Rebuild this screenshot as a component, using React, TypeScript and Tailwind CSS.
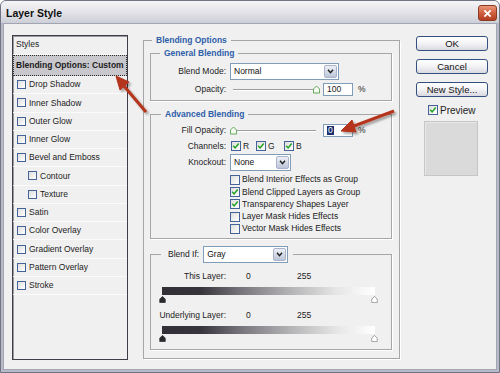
import React from "react";

const effects = [
  { label: "Drop Shadow" },
  { label: "Inner Shadow" },
  { label: "Outer Glow" },
  { label: "Inner Glow" },
  { label: "Bevel and Emboss" },
  { label: "Contour", sub: true },
  { label: "Texture", sub: true },
  { label: "Satin" },
  { label: "Color Overlay" },
  { label: "Gradient Overlay" },
  { label: "Pattern Overlay" },
  { label: "Stroke" },
];

const advancedOptions = [
  { label: "Blend Interior Effects as Group", checked: false },
  { label: "Blend Clipped Layers as Group", checked: true },
  { label: "Transparency Shapes Layer", checked: true },
  { label: "Layer Mask Hides Effects", checked: false },
  { label: "Vector Mask Hides Effects", checked: false },
];

const CheckBox: React.FC<{ checked?: boolean; small?: boolean }> = ({ checked = false, small = false }) => (
  <span
    className={`inline-flex shrink-0 items-center justify-center border border-[#44639a] bg-gradient-to-br from-[#dedfdb] to-white ${
      small ? "h-[9px] w-[9px]" : "h-[10px] w-[10px]"
    }`}
  >
    {checked && (
      <svg viewBox="0 0 10 10" className="h-[8px] w-[8px]">
        <path d="M1.5 4.8 L3.9 7.4 L8.4 2" fill="none" stroke="#23a323" strokeWidth="1.9" />
      </svg>
    )}
  </span>
);

const Select: React.FC<{ value: string; width: string }> = ({ value, width }) => (
  <div className={`flex h-[17px] shrink-0 items-stretch border border-[#7f9db9] bg-white ${width}`}>
    <span className="flex-1 pl-[3px] text-[8.5px] font-normal leading-[15px] text-[#111]">{value}</span>
    <span className="m-px flex w-[13px] items-center justify-center rounded-[2px] border border-[#a9b4cc] bg-gradient-to-b from-[#eef0f6] to-[#bcc5d8]">
      <svg viewBox="0 0 8 6" className="h-[5px] w-[7px]">
        <path d="M1 1 L4 4.5 L7 1" fill="none" stroke="#1e1e1e" strokeWidth="1.7" />
      </svg>
    </span>
  </div>
);

const Thumb: React.FC<{ fill: string; stroke: string; className?: string }> = ({ fill, stroke, className }) => (
  <svg viewBox="0 0 8 9" className={className ?? "h-[9px] w-[7px]"}>
    <path d="M0.5 8.5 V4 L4 0.5 L7.5 4 V8.5 Z" fill={fill} stroke={stroke} />
  </svg>
);

const Slider: React.FC<{ atEnd?: boolean }> = ({ atEnd = false }) => (
  <div className="relative h-[13px] w-[90px] shrink-0">
    <div className="absolute left-[3px] right-[4px] top-[6px] h-[2px] border-t border-b border-t-[#9d9d9d] border-b-white" />
    <div className={`absolute top-[2px] ${atEnd ? "left-[83px]" : "left-0"}`}>
      <Thumb fill="#f6fbf2" stroke="#4f9a46" />
    </div>
  </div>
);

const PercentInput: React.FC<{ value: string; selected?: boolean }> = ({ value, selected = false }) => (
  <div className="ml-[3px] flex h-[13px] w-[30px] shrink-0 items-center border border-[#7f9db9] bg-white pl-[3px] text-[8.5px]">
    {selected ? <span className="bg-[#1c2f6e] px-px leading-[9px] text-white">{value}</span> : value}
  </div>
);

const Label: React.FC<{ children: React.ReactNode }> = ({ children }) => (
  <span className="w-[75px] shrink-0 whitespace-nowrap text-right">{children}</span>
);

const GrayBar: React.FC = () => (
  <div className="ml-[8px] w-[219px]">
    <div className="mx-[3px] h-[8px] bg-[linear-gradient(to_right,#332f37_0%,#38343c_18%,#7a777e_38%,#b8b7b9_62%,#e6e6e6_82%,#ffffff_100%)]" />
    <div className="mt-[1px] flex h-[7px] justify-between">
      <Thumb fill="#2a2a2e" stroke="#2a2a2e" className="h-[7px] w-[7px]" />
      <Thumb fill="#ffffff" stroke="#8a8a8a" className="h-[7px] w-[7px]" />
    </div>
  </div>
);

const groupClass = "border border-[#a6a6a6] shadow-[1px_1px_0_#ffffff]";
const legendClass = "font-bold text-[#2e5ea8] whitespace-nowrap";

const App: React.FC = () => {
  return (
    <div className="relative flex h-[373px] w-[500px] flex-col overflow-hidden rounded-t-[6px] border border-[#6f7382] bg-[#b8bbc7] font-['Liberation_Sans',Arial,sans-serif] text-[8.5px] text-[#1c1c1c]">
      {/* title bar */}
      <div className="flex h-[22px] shrink-0 items-start bg-gradient-to-b from-[#f5f5f7] via-[#e4e4e9] to-[#cdcfd8]">
        <span className="ml-[5px] mt-[6px] text-[10.5px] font-bold leading-[12px] text-[#111]">Layer Style</span>
        <div className="ml-auto mr-[2px] mt-[4px] flex h-[16px] w-[19px] items-center justify-center rounded-[3px] border border-[#8b3a22] bg-gradient-to-b from-[#e9967a] via-[#d1603f] to-[#b33d20]">
          <svg viewBox="0 0 10 10" className="h-[9px] w-[9px]">
            <path d="M1.5 1.5 L8.5 8.5 M8.5 1.5 L1.5 8.5" stroke="#ffffff" strokeWidth="2" />
          </svg>
        </div>
      </div>

      {/* body */}
      <div className="mx-[2px] mb-[2px] flex flex-1 items-start border border-[#a2a5b3] bg-[#f0f0f0] pl-[8px] pt-[11px]">
        {/* styles list */}
        <div className="h-[325px] w-[116px] shrink-0 border border-[#3e3e46] bg-[#f0f0f0] shadow-[inset_1px_1px_0_#9a9aa2]">
          <div className="flex h-[19px] items-center border-b border-[#fafafa] pb-[2px] pl-[3px]">Styles</div>
          <div className="flex h-[21px] items-center border border-dotted border-[#2a2a2a] bg-[#c7c7cc] pl-[2px] font-bold">
            Blending Options: Custom
          </div>
          {effects.map((e) => (
            <div
              key={e.label}
              className={`flex h-[18.27px] items-center gap-[3px] border-b border-[#fbfbfb] ${e.sub ? "pl-[15px]" : "pl-[4px]"}`}
            >
              <CheckBox small />
              <span>{e.label}</span>
            </div>
          ))}
        </div>

        {/* blending options */}
        <fieldset className={`ml-[15px] w-[257px] shrink-0 pb-[8px] pl-[6px] pr-[7px] ${groupClass}`}>
          <legend className={`ml-[2px] px-[4px] leading-[11px] ${legendClass}`}>Blending Options</legend>

          <fieldset className={`mt-[1px] pb-[4px] ${groupClass}`}>
            <legend className={`ml-[9px] px-[4px] leading-[12px] ${legendClass}`}>General Blending</legend>
            <div className="mt-[4px] flex h-[17px] items-center">
              <Label>Blend Mode:</Label>
              <div className="ml-[4px]">
                <Select value="Normal" width="w-[109px]" />
              </div>
            </div>
            <div className="mt-[3px] flex h-[13px] items-center">
              <Label>Opacity:</Label>
              <div className="ml-[4px] flex items-center">
                <Slider atEnd />
                <PercentInput value="100" />
                <span className="ml-[5px]">%</span>
              </div>
            </div>
          </fieldset>

          <fieldset className={`mt-[7px] pb-[3px] ${groupClass}`}>
            <legend className={`ml-[10px] px-[4px] leading-[12px] ${legendClass}`}>Advanced Blending</legend>
            <div className="mt-[4px] flex h-[13px] items-center">
              <Label>Fill Opacity:</Label>
              <div className="ml-[4px] flex items-center">
                <Slider />
                <PercentInput value="0" selected />
                <span className="ml-[5px]">%</span>
              </div>
            </div>
            <div className="mt-[4px] flex h-[10px] items-center">
              <Label>Channels:</Label>
              <div className="ml-[5px] flex items-center">
                <span className="flex w-[25px] items-center gap-[2px]">
                  <CheckBox checked />R
                </span>
                <span className="flex w-[28px] items-center gap-[2px]">
                  <CheckBox checked />G
                </span>
                <span className="flex items-center gap-[2px]">
                  <CheckBox checked />B
                </span>
              </div>
            </div>
            <div className="mt-[3px] flex h-[17px] items-center">
              <Label>Knockout:</Label>
              <div className="ml-[4px]">
                <Select value="None" width="w-[61px]" />
              </div>
            </div>
            <div className="mt-[2.5px] pl-[79px]">
              {advancedOptions.map((o) => (
                <div key={o.label} className="flex h-[12.3px] items-center gap-[2px] whitespace-nowrap">
                  <CheckBox checked={o.checked} />
                  <span>{o.label}</span>
                </div>
              ))}
            </div>
          </fieldset>

          <fieldset className={`mt-[7px] pb-[7px] ${groupClass}`}>
            <legend className="ml-[10px] pl-[7px] pr-[5px]">
              <div className="flex h-[17px] items-center">
                <span>Blend If:</span>
                <div className="ml-[4px]">
                  <Select value="Gray" width="w-[85px]" />
                </div>
              </div>
            </legend>
            <div className="mt-[8px] flex h-[11px] items-center">
              <Label>This Layer:</Label>
              <span className="ml-[20px] w-[51px]">0</span>
              <span>255</span>
            </div>
            <div className="mt-[5px]">
              <GrayBar />
            </div>
            <div className="mt-[7px] flex h-[11px] items-center">
              <Label>Underlying Layer:</Label>
              <span className="ml-[20px] w-[51px]">0</span>
              <span>255</span>
            </div>
            <div className="mt-[5px]">
              <GrayBar />
            </div>
          </fieldset>
        </fieldset>

        {/* buttons */}
        <div className="ml-[16px] mt-[1px] flex w-[72px] shrink-0 flex-col">
          {["OK", "Cancel", "New Style..."].map((b, i) => (
            <button
              key={b}
              className={`h-[15px] w-[72px] rounded-[3px] border border-[#34507f] bg-gradient-to-b from-white via-[#f3f3f6] to-[#d9d9e1] text-[9.5px] leading-[13px] text-[#111] ${
                i > 0 ? "mt-[8px]" : ""
              }`}
            >
              {b}
            </button>
          ))}
          <div className="ml-[12px] mt-[8px] flex h-[10px] items-center gap-[2px] text-[10px]">
            <CheckBox checked />
            <span>Preview</span>
          </div>
          <div className="ml-[8px] mt-[6px] h-[55px] w-[54px] border border-[#c6c6c6] bg-[#dadada] shadow-[inset_1px_1px_0_#e8e8e8]" />
        </div>
      </div>

      {/* annotation arrows */}
      <svg className="pointer-events-none absolute left-0 top-0 h-[373px] w-[500px]" viewBox="0 0 500 373">
        <defs>
          <filter id="arrowShadow" x="-20%" y="-20%" width="140%" height="140%">
            <feDropShadow dx="2" dy="2" stdDeviation="1.2" floodColor="#000" floodOpacity="0.35" />
          </filter>
        </defs>
        <g filter="url(#arrowShadow)" fill="#b5341f" stroke="#b5341f">
          <line x1="145" y1="111" x2="123" y2="85" strokeWidth="3" />
          <polygon points="115,75 128,81 119,89" strokeWidth="1" />
          <line x1="393" y1="110" x2="353" y2="125" strokeWidth="3" />
          <polygon points="340,130 351,119 355,131" strokeWidth="1" />
        </g>
      </svg>
    </div>
  );
};

export default App;
